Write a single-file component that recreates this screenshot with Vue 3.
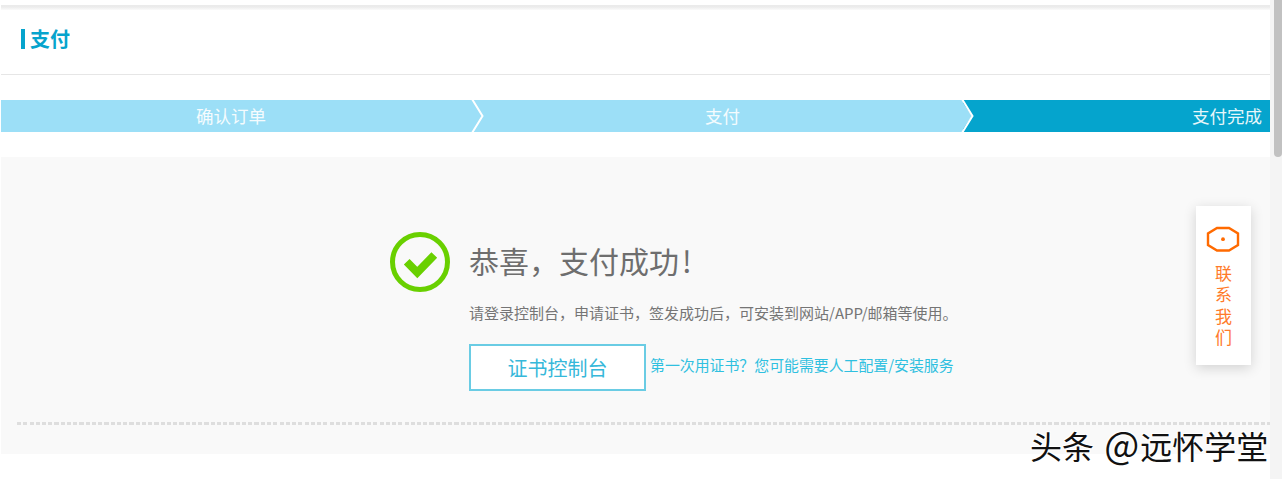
<script setup>
const steps = [
  { label: '确认订单', cls: 's1' },
  { label: '支付', cls: 's2' },
  { label: '支付完成', cls: 's3' }
]
</script>

<template>
  <div class="page">
    <div class="content">
      <div class="topline"></div>
      <header class="head">
        <h1 class="title">支付</h1>
      </header>
      <div class="steps">
        <div v-for="s in steps" :key="s.cls" class="step" :class="s.cls">
          <span class="step-label">{{ s.label }}</span>
          <svg v-if="s.cls !== 's3'" class="arrow" width="14" height="32" viewBox="0 0 14 32">
            <path d="M0 0 L11 16 L0 32 Z" fill="#9cdff7" />
            <path d="M1 -1 L11.5 16 L1 33" fill="none" stroke="#fff" stroke-width="2" />
          </svg>
        </div>
      </div>
      <main class="panel">
        <section class="result">
          <svg class="ok" width="62" height="62" viewBox="0 0 62 62">
            <circle cx="31" cy="31" r="27.5" fill="none" stroke="#69d000" stroke-width="5" />
            <path d="M17.7 30.7 L28.3 41.5 L45.3 24" fill="none" stroke="#69d000" stroke-width="8" />
          </svg>
          <div class="info">
            <h2 class="msg">恭喜，支付成功<span class="bang">!</span></h2>
            <p class="desc">请登录控制台，申请证书，签发成功后，可安装到网站/APP/邮箱等使用。</p>
            <div class="actions">
              <button class="console">证书控制台</button>
              <a class="help">第一次用证书？您可能需要人工配置/安装服务</a>
            </div>
          </div>
        </section>
        <div class="dots"></div>
      </main>
    </div>
    <div class="track"><div class="thumb"></div></div>
    <aside class="contact">
      <svg class="contact-icon" width="34" height="26" viewBox="0 0 34 26">
        <path d="M11 2 H23 L32 7.5 V19 L23 24.5 H11 L2 19 V7.5 Z" fill="none" stroke="#ff6a00" stroke-width="2.4" />
        <circle cx="17" cy="13.2" r="1.9" fill="#ff6a00" />
      </svg>
      <div class="contact-text">联系我们</div>
    </aside>
    <div class="mark">头条 <span class="at">@</span>远怀学堂</div>
  </div>
</template>

<style scoped>
.page {
  position: relative;
  display: flex;
  width: 1282px;
  height: 479px;
  overflow: hidden;
  background: #fff;
  font-family: "Noto Sans CJK SC", "Liberation Sans", sans-serif;
}
.content {
  width: 1269px;
  margin-left: 1px;
  flex: none;
}
.topline {
  height: 5px;
  margin-top: 5px;
  background: linear-gradient(#ebebeb, #ececec 40%, #fbfbfb);
}
.head {
  height: 45px;
  border-bottom: 1px solid #e6e6e6;
  padding: 19px 0 0 20px;
  box-sizing: content-box;
}
.title {
  margin: 0;
  height: 20px;
  border-left: 4px solid #06a4cd;
  padding-left: 5px;
  font-size: 20px;
  line-height: 19px;
  font-weight: 700;
  color: #06a4cd;
}
.steps {
  display: flex;
  height: 32px;
  margin-top: 25px;
  color: #fff;
  font-size: 17.5px;
}
.step {
  position: relative;
  height: 32px;
  line-height: 32px;
}
.step-label { opacity: 0.9; }
.s1 {
  width: 471.5px;
  padding-left: 195px;
  box-sizing: border-box;
  background: #9cdff7;
}
.s2 {
  width: 490.5px;
  padding-left: 232.5px;
  box-sizing: border-box;
  background: #9cdff7;
}
.s3 {
  flex: 1;
  text-align: right;
  padding-right: 8px;
  background: #05a4cd;
}
.arrow {
  position: absolute;
  top: 0;
  right: -12px;
  z-index: 1;
  overflow: visible;
}
.panel {
  margin-top: 25px;
  height: 297px;
  background: #f9f9f9;
  display: flex;
  flex-direction: column;
}
.result {
  display: flex;
  padding: 74px 0 0 388px;
  height: 191px;
  box-sizing: content-box;
}
.ok { flex: none; margin-right: 18px; }
.info { min-width: 0; }
.msg {
  margin: -2px 0 0;
  height: 62px;
  line-height: 62px;
  font-size: 30px;
  font-weight: 400;
  color: #6e6e6e;
}
.bang { margin-left: 3px; }
.desc {
  margin: 12px 0 0;
  font-size: 15px;
  line-height: 20px;
  color: #757575;
}
.actions {
  display: flex;
  align-items: center;
  margin-top: 21px;
}
.console {
  width: 177px;
  height: 47px;
  background: #fff;
  border: 2px solid #6accE4;
  box-sizing: border-box;
  color: #36b8da;
  font-family: inherit;
  font-size: 20px;
  padding: 0;
  border-radius: 0;
}
.help {
  margin-left: 4px;
  margin-top: -6px;
  font-size: 14.9px;
  color: #2fc0e0;
  white-space: nowrap;
}
.dots {
  margin-left: 16px;
  height: 3px;
  background: repeating-linear-gradient(90deg, #dedede 0 4px, transparent 4px 6.25px);
}
.track {
  width: 12px;
  flex: none;
  height: 479px;
  display: flex;
  justify-content: flex-end;
  background: #f4f4f4;
}
.thumb {
  width: 8px;
  height: 157px;
  background: #c1c1c1;
  border-radius: 0 0 4px 4px;
}
.contact {
  position: absolute;
  left: 1196px;
  top: 206px;
  width: 55px;
  height: 159px;
  box-sizing: border-box;
  padding-top: 20px;
  background: #fff;
  box-shadow: 0 3px 12px rgba(0, 0, 0, 0.16);
  display: flex;
  flex-direction: column;
  align-items: center;
}
.contact-icon { margin-left: -1px; }
.contact-text {
  margin-top: 10px;
  width: 17px;
  font-size: 17px;
  line-height: 21.3px;
  color: #ff7a2a;
  text-align: center;
}
.mark {
  position: absolute;
  left: 1030px;
  top: 423px;
  font-size: 32px;
  line-height: 44px;
  white-space: nowrap;
  color: #111;
  text-shadow: 1px 1px 0 #fff, -1px -1px 0 #fff, 1px -1px 0 #fff, -1px 1px 0 #fff;
}
.at {
  margin-left: 3px;
  margin-right: 1px;
  font-size: 37px;
  line-height: 30px;
}
</style>

<style>
html, body { margin: 0; overflow: hidden; background: #fff; }
</style>
